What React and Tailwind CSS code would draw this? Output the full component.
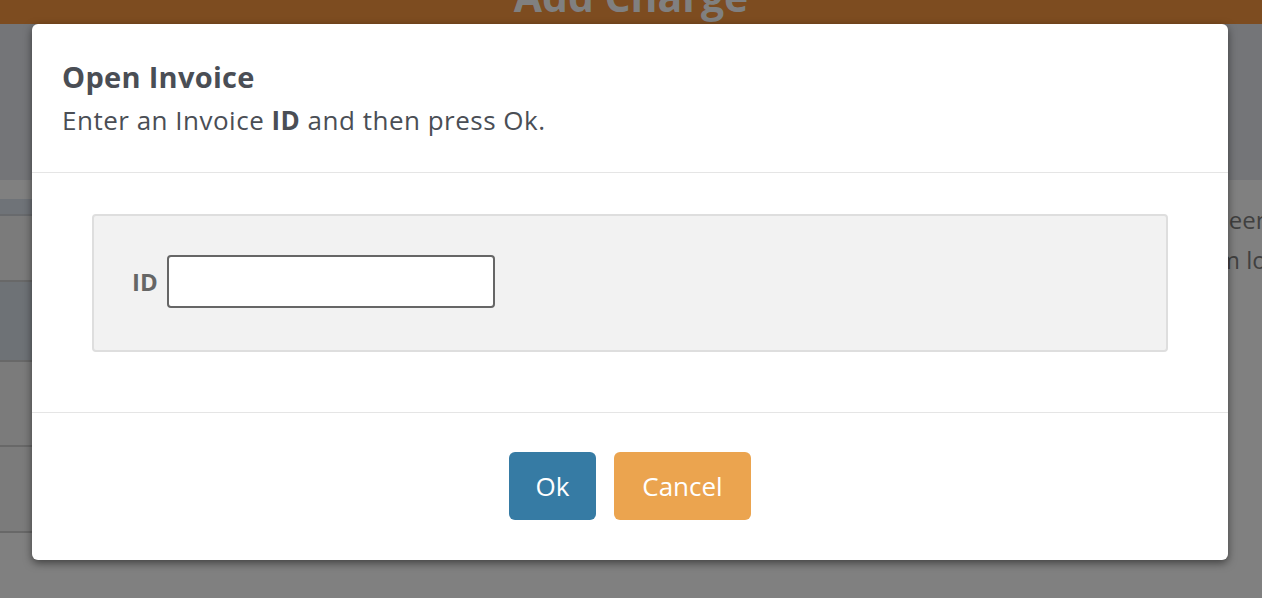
import { useState } from 'react';

const rows = [
  { h: 'h-[66px]', bg: 'bg-[#7b7b7b]' },
  { h: 'h-[80px]', bg: 'bg-[#6e7276]' },
  { h: 'h-[85px]', bg: 'bg-[#7b7b7b]' },
  { h: 'h-[86px]', bg: 'bg-[#7b7b7b]' },
];

const App = () => {
  const [invoiceId, setInvoiceId] = useState('');

  return (
    <div className="relative h-[598px] w-full overflow-hidden bg-[#808080] font-['Open_Sans',sans-serif]">
      {/* Page behind the modal (dimmed) */}
      <div className="flex h-6 justify-center overflow-hidden bg-[#7d4c20]">
        <span className="-mt-[24px] text-[41px] font-bold leading-none text-[#808080]">Add Charge</span>
      </div>
      <div className="h-[156px] bg-[#747578]" />
      <div className="flex">
        <div className="w-[600px] pt-[19px]">
          <div className="h-[17px] border-b-2 border-[#686a6d] bg-[#6f7378]" />
          {rows.map((row, i) => (
            <div key={i} className={`${row.h} ${row.bg} border-b-2 border-[#686868]`} />
          ))}
        </div>
        <div className="ml-auto w-[48px] overflow-hidden pt-[20px] text-[24px] leading-[40px] whitespace-nowrap text-[#404040]">
          <div>been</div>
          <div className="-ml-[6px]">rm lo</div>
        </div>
      </div>

      {/* Modal */}
      <div className="absolute inset-0 pt-6 pl-8">
        <div className="flex h-[536px] w-[1196px] flex-col rounded-md bg-white shadow-[0_3px_9px_rgba(0,0,0,0.5)]">
          <div className="h-[149px] border-b border-[#e5e5e5] px-[30px] pt-[34px]">
            <h2 className="text-[29px] font-bold leading-[38px] tracking-[0.3px] text-[#4a4e55]">Open Invoice</h2>
            <p className="mt-[7px] text-[26px] leading-[34px] tracking-[0.5px] text-[#4a4e55]">
              Enter an Invoice <b>ID</b> and then press Ok.
            </p>
          </div>
          <div className="border-b border-[#e5e5e5] px-[60px] pt-[41px] pb-[60px]">
            <div className="flex h-[138px] items-start rounded border-2 border-[#dedede] bg-[#f2f2f2] pt-[39px] pl-[38px]">
              <label className="flex items-center gap-[9px] text-[24px] font-bold text-[#666666]">
                <span>ID</span>
                <input
                  value={invoiceId}
                  onChange={(e) => setInvoiceId(e.target.value)}
                  className="h-[53px] w-[328px] rounded border-2 border-[#666666] bg-white px-2 text-[20px] font-normal outline-none"
                />
              </label>
            </div>
          </div>
          <div className="flex flex-1 items-start justify-center gap-[18px] pt-[39px]">
            <button className="h-[68px] w-[87px] rounded-md bg-[#367ba4] text-[26px] text-white">Ok</button>
            <button className="h-[68px] w-[137px] rounded-md bg-[#eba44f] text-[26px] text-white">Cancel</button>
          </div>
        </div>
      </div>
    </div>
  );
};

export default App;
